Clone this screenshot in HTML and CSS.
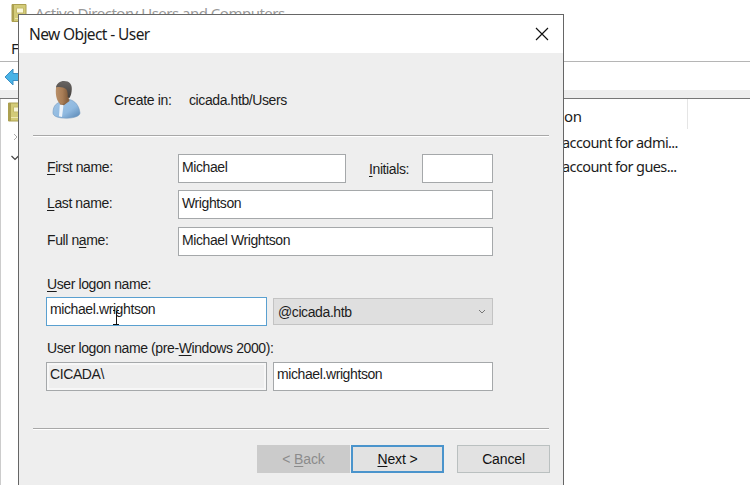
FILE: index.html
```html
<!DOCTYPE html>
<html lang="en">
<head>
<meta charset="utf-8">
<title>Active Directory Users and Computers</title>
<link rel="stylesheet" href="styles.css">
</head>
<body>
<div class="console">
  <header class="console-title">
    <svg class="book" width="16" height="18" viewBox="0 0 16 18"><path d="M1 .5h14v17H1z" fill="#d3cb78" stroke="#aca050"/><path d="M1 1h2v16H1z" fill="#aca050"/><path d="M5.500 4h7v5h-7z" fill="#fbf8dc" stroke="#c5bb6c"/><path d="M4 14.500h11" stroke="#eee8b0"/></svg>
    <span class="console-name">Active Directory Users and Computers</span>
  </header>
  <nav class="menu"><span>File</span></nav>
  <div class="toolbar">
    <svg width="18" height="18" viewBox="0 0 18 18"><path d="M1 9 9 1v4.500h8v7H9V17z" fill="#49b3e6" stroke="#3c8fc4"/></svg>
  </div>
  <div class="strip"></div>
  <div class="panes">
    <div class="tree">
      <svg class="tree-book" width="16" height="20" viewBox="0 0 16 20"><path d="M1.500 1h14v18h-14z" fill="#d3cb78" stroke="#aca050"/><path d="M1.500 1H4v18H1.500z" fill="#aca050"/><path d="M6.500 5h7v5h-7z" fill="#fbf8dc" stroke="#c5bb6c"/><path d="M4 15.500h11" stroke="#eee8b0"/></svg>
      <svg class="closed" width="6" height="8" viewBox="0 0 6 8"><path d="m1 1 3 3-3 3" fill="none" stroke="#aaa"/></svg>
      <svg class="opened" width="8" height="6" viewBox="0 0 8 6"><path d="m.5 1 3.500 3.500L7.500 1" fill="none" stroke="#444" stroke-width="1.2"/></svg>
    </div>
    <div class="list">
      <div class="list-head">on</div>
      <div class="list-row">account for admi...</div>
      <div class="list-row">account for gues...</div>
    </div>
  </div>
</div>

<section class="dialog">
  <header class="dialog-title">
    <span class="dialog-name">New Object - User</span>
    <svg width="14" height="14" viewBox="0 0 14 14"><path d="m1 1 12 12M13 1 1 13" stroke="#111" stroke-width="1.15"/></svg>
  </header>
  <div class="dialog-body">
    <div class="intro">
      <svg class="person" width="30" height="40" viewBox="0 0 30 40">
        <defs>
          <linearGradient id="skin"><stop offset="0" stop-color="#b98f68"/><stop offset=".45" stop-color="#a87d56"/><stop offset="1" stop-color="#6f4d30"/></linearGradient>
          <linearGradient id="shirt" x2="1" y2="1"><stop offset="0" stop-color="#a3c6e6"/><stop offset=".6" stop-color="#8fb9e0"/><stop offset="1" stop-color="#5684b2"/></linearGradient>
          <linearGradient id="hair" x2="0" y2="1"><stop offset="0" stop-color="#686563"/><stop offset="1" stop-color="#45403c"/></linearGradient>
        </defs>
        <path d="M2 33c0-6 2-9 7-11l9-2.500c6 1 10 6 11 13.500 0 3-6 5.200-13.500 5.200S2 36.500 2 33z" fill="url(#shirt)" stroke="#7299bf" stroke-width=".6"/>
        <path d="M8.500 21 18 18.500l.5 2.500-6 4.500-3.500-.5z" fill="#8a6342"/>
        <path d="m8.800 24.500 3.700.5-1.500 12-3-.8z" fill="#edf3fa"/>
        <path d="M5 8c1-4 4-6 8-6 5 0 7 4 6.500 9.500C19 18 15.500 24 11 24S4 16 5 8z" fill="url(#skin)"/>
        <path d="M5 7.500C5.500 3.500 9 1 13 1c5.500 0 8 3.500 7.800 8-.1 3.500-.8 6.500-2.300 9l-1.800-1c.3-3-.2-5.500-1.200-7.500C12.500 7 8 6.500 5 7.500z" fill="url(#hair)"/>
      </svg>
      <span class="create">Create in:</span><span class="path">cicada.htb/Users</span>
    </div>
    <div class="rule"></div>
    <div class="form">
      <div class="row first">
        <label><u>F</u>irst name:</label>
        <div class="field"><span>Michael</span></div>
        <label class="initials"><u>I</u>nitials:</label>
        <div class="field"></div>
      </div>
      <div class="row"><label><u>L</u>ast name:</label><div class="field"><span>Wrightson</span></div></div>
      <div class="row"><label>Full n<u>a</u>me:</label><div class="field"><span>Michael Wrightson</span></div></div>
      <div class="caption logon"><label><u>U</u>ser logon name:</label></div>
      <div class="pair">
        <div class="field focus"><span>michael.wrightson</span>
          <svg class="caret" width="8" height="17" viewBox="0 0 8 17"><path d="M1 1.500h2M5 1.500h2M4.500 2v13M1 15.500h6" stroke="#111" fill="none"/></svg>
        </div>
        <div class="select"><span>@cicada.htb</span><svg width="8" height="6" viewBox="0 0 8 6"><path d="M1 1l3 3 3-3" fill="none" stroke="#777"/></svg></div>
      </div>
      <div class="caption pre"><label>User logon name (pre-<u>W</u>indows 2000):</label></div>
      <div class="pair">
        <div class="field readonly"><span>CICADA\</span></div>
        <div class="field"><span>michael.wrightson</span></div>
      </div>
    </div>
    <div class="rule"></div>
    <div class="buttons">
      <div class="btn disabled"><span>&lt; <u>B</u>ack</span></div>
      <div class="btn primary"><span><u>N</u>ext &gt;</span></div>
      <div class="btn cancel"><span>Cancel</span></div>
    </div>
  </div>
</section>
</body>
</html>
```
FILE: styles.css
```css
* { box-sizing: border-box; }
body {
  margin: 0;
  width: 750px;
  height: 485px;
  overflow: hidden;
  background: #fff;
  color: #1c1c1c;
  font: 14px/16px "Liberation Sans", Arial, sans-serif;
  letter-spacing: -0.4px;
}
svg { display: block; flex: none; }
u { text-decoration-thickness: 1px; text-underline-offset: 2px; }

.console {
  height: 485px;
  display: flex;
  flex-direction: column;
  font-family: "Noto Sans", sans-serif;
  font-size: 15px;
  line-height: 20px;
}
.console-title { height: 32px; display: flex; padding: 4px 0 0 11px; gap: 8px; color: #999; }
.console-name { white-space: nowrap; letter-spacing: -0.5px; margin-top: -1px; }
.menu { height: 29px; padding: 6px 0 0 11px; }
.toolbar { height: 29px; border-top: 1px solid #b5b5b5; padding: 6px 0 0 4px; }
.strip { height: 9px; background: #eee; border-bottom: 1px solid #777; }
.panes { flex: 1; display: flex; }
.tree { width: 564px; border-left: 1px solid #ccc; padding: 3px 0 0 6px; }
.closed { margin: 11px 0 0 6px; }
.opened { margin: 14px 0 0 4px; }
.list { flex: 1; white-space: nowrap; }
.list-head { width: 124px; height: 30px; border-right: 1px solid #e5e5e5; padding-top: 7px; }
.list-row { height: 24px; font-size: 14.5px; line-height: 24px; margin-left: -2px; letter-spacing: -0.6px; }
.list-head + .list-row { margin-top: 1px; }

.dialog {
  position: absolute;
  left: 18px;
  top: 14px;
  width: 546px;
  height: 490px;
  border: 1px solid #666;
  background: #eee;
}
.dialog-title {
  height: 38px;
  background: #fff;
  display: flex;
  justify-content: space-between;
  align-items: center;
  padding: 0 14px 0 10px;
  font-family: "Noto Sans", sans-serif;
  font-size: 15.5px;
  letter-spacing: -0.6px;
}
.dialog-body { padding: 0 14px; }
.intro { height: 82px; display: flex; align-items: center; padding-left: 18px; }
.person { margin-top: 12px; }
.create { margin: 11px 0 0 33px; width: 75px; letter-spacing: -0.3px; }
.path { margin-top: 11px; }
.rule { height: 2px; background: #a8a8a8; border-bottom: 1px solid #fff; }
.form { height: 291px; width: 460px; padding: 17px 0 0 13px; }
.row { display: grid; grid-template-columns: 132px 315px; height: 29px; margin-bottom: 8px; }
.row.first { grid-template-columns: 132px 168px 76px 71px; margin-bottom: 7px; }
.row label { padding: 5px 0 0 1px; }
.row .initials { padding: 7px 0 0 23px; }
.field { height: 29px; border: 1px solid #a5a8aa; background: #fff; padding: 4px 3px; position: relative; }
.caption { height: 19px; padding-left: 1px; white-space: nowrap; }
.logon { margin-top: 20px; height: 21px; }
.pre { margin-top: 14px; height: 22px; }
.pair { display: grid; grid-template-columns: 221px 220px; gap: 6px; height: 29px; }
.pair .field { padding-top: 3px; }
.focus { border-color: #5aa0d0; }
.caret { position: absolute; left: 65px; top: 11px; }
.select {
  height: 27px;
  margin-top: 1px;
  border: 1px solid #c3c3c3;
  background: #dfdfdf;
  display: flex;
  align-items: center;
  justify-content: space-between;
  padding: 1px 6px 0 4px;
}
.readonly { background: #eee; box-shadow: inset 0 0 0 2px #f7f7f7; }
.buttons { display: flex; justify-content: flex-end; padding-top: 15px; margin-right: -1px; letter-spacing: -0.15px; }
.btn {
  width: 93px;
  height: 28px;
  border: 1px solid #bac0c0;
  background: #e2e2e2;
  color: #111;
  display: flex;
  align-items: center;
  justify-content: center;
}
.disabled { background: #cbcbcb; border-color: #cbcbcb; color: #8b8b8b; }
.primary { border: 2px solid #4a94cc; margin: 0 13px 0 1px; }
```
